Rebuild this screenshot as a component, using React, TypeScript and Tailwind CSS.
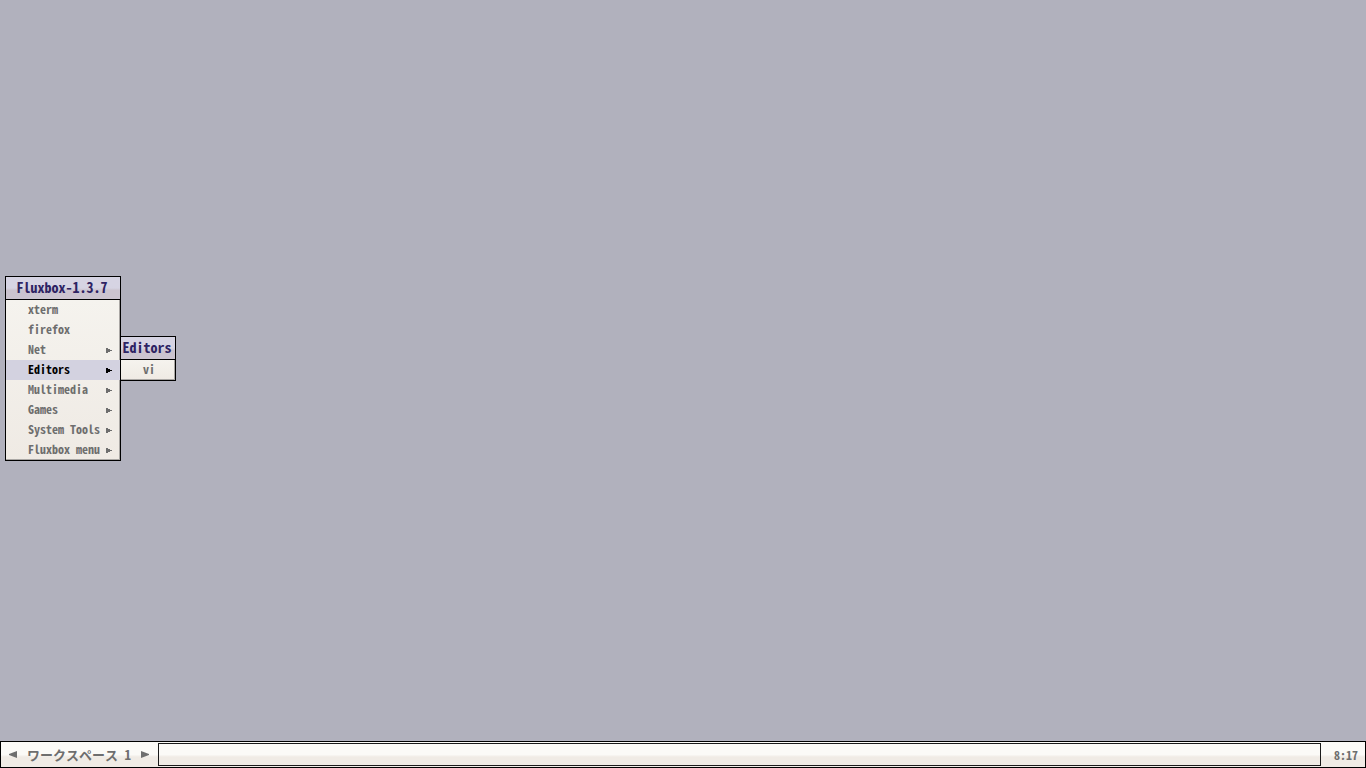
import { useState } from 'react';

const items = [
  { label: 'xterm', submenu: false },
  { label: 'firefox', submenu: false },
  { label: 'Net', submenu: true },
  { label: 'Editors', submenu: true },
  { label: 'Multimedia', submenu: true },
  { label: 'Games', submenu: true },
  { label: 'System Tools', submenu: true },
  { label: 'Fluxbox menu', submenu: true },
];

function MenuArrow() {
  return (
    <svg viewBox="0 0 6 5" className="h-[5px] w-[6px] fill-current" shapeRendering="crispEdges" aria-hidden="true">
      <path d="M0 0h2v1h2v1h2v1h-2v1h-2v1h-2z" />
    </svg>
  );
}

function BarArrow({ flip = false }: { flip?: boolean }) {
  return (
    <svg viewBox="0 0 8 7" className={flip ? 'h-[7px] w-2 rotate-180 fill-current' : 'h-[7px] w-2 fill-current'} aria-hidden="true">
      <path d="M0 0 L8 3 V4 L0 7z" />
    </svg>
  );
}

function MenuTitle({ children }: { children: string }) {
  return (
    <h2 className="h-[23px] border-b border-black bg-linear-to-b from-[#d6d4e3] from-50% to-[#cbc4cf] to-60% pr-0.5 text-center text-[14px] leading-5 font-bold text-[#2e2363]">
      {children}
    </h2>
  );
}

export default function App() {
  const [active, setActive] = useState('Editors');

  return (
    <div className="flex h-screen flex-col bg-[#b1b1bd] font-['Noto_Sans_Mono_CJK_JP','Noto_Sans_CJK_JP',monospace] text-[12px] font-bold text-[#6e6e6e]">
      <main className="relative flex-1">
        <nav aria-label="Fluxbox-1.3.7" className="absolute top-[276px] left-[5px] w-[116px] border border-black">
          <MenuTitle>Fluxbox-1.3.7</MenuTitle>
          <ul className="bg-linear-to-b from-[#f5f3ee] to-[#efeae4] shadow-[inset_-1px_-1px_0_#aaa7a4]">
            {items.map((item) => (
              <li key={item.label}>
                <button
                  onMouseEnter={() => setActive(item.label)}
                  className={`flex h-5 w-full items-center justify-between pr-2 pl-[22px] whitespace-pre ${
                    item.label === active ? 'bg-[#d3d2e0] text-black' : ''
                  }`}
                >
                  <span className="self-start leading-[18px]">{item.label}</span>
                  {item.submenu && <MenuArrow />}
                </button>
              </li>
            ))}
          </ul>
        </nav>

        {active === 'Editors' && (
          <nav aria-label="Editors" className="absolute top-[336px] left-[120px] w-14 border border-black">
            <MenuTitle>Editors</MenuTitle>
            <button className="flex h-5 w-full items-start bg-linear-to-b from-[#f5f3ee] to-[#efeae4] pl-[22px] leading-[18px] shadow-[inset_-1px_-1px_0_#aaa7a4]">
              vi
            </button>
          </nav>
        )}
      </main>

      <footer className="flex h-[27px] items-stretch border border-black bg-linear-to-b from-[#fbfaf7] from-50% to-[#f0ebe5] to-60%">
        <div className="flex w-[157px] items-center justify-between pr-[9px] pl-2">
          <button aria-label="Previous workspace">
            <BarArrow flip />
          </button>
          <span className="text-[13px] leading-[25px]">ワークスペース 1</span>
          <button aria-label="Next workspace">
            <BarArrow />
          </button>
        </div>
        <div className="my-px flex-1 border border-[#1a1a1a]" />
        <time className="w-11 pr-[7px] text-right leading-[25px]">8:17</time>
      </footer>
    </div>
  );
}
